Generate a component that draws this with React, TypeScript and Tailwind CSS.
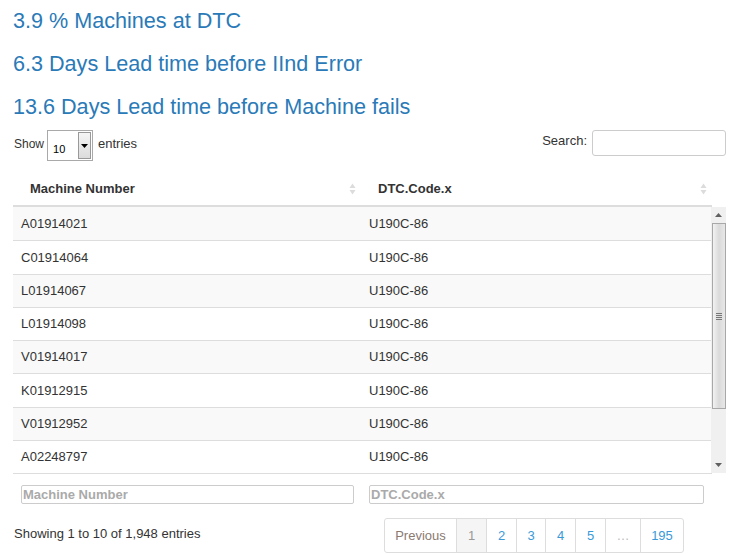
const rows = [
  'A01914021',
  'C01914064',
  'L01914067',
  'L01914098',
  'V01914017',
  'K01912915',
  'V01912952',
  'A02248797',
];

function SortIcon() {
  return (
    <svg width="7" height="12" viewBox="0 0 7 12" className="shrink-0">
      <path d="M3.5 0.5 L6.5 5 L0.5 5 Z" fill="#dcdcdc" />
      <path d="M3.5 11.5 L6.5 7 L0.5 7 Z" fill="#dcdcdc" />
    </svg>
  );
}

function ScrollBar() {
  return (
    <div className="w-[15px] bg-[#f0f0f0] flex flex-col items-center">
      <div className="h-[16px] flex items-center justify-center">
        <svg width="7" height="4" viewBox="0 0 7 4">
          <path d="M3.5 0 L7 4 L0 4 Z" fill="#606060" />
        </svg>
      </div>
      <div className="w-[14px] h-[186px] border border-[#a8a8a8] bg-gradient-to-r from-[#f2f2f2] via-[#dadada] to-[#e8e8e8] flex items-center justify-center">
        <div className="flex flex-col gap-[1px]">
          <div className="w-[6px] h-[1px] bg-[#777]" />
          <div className="w-[6px] h-[1px] bg-[#777]" />
          <div className="w-[6px] h-[1px] bg-[#777]" />
          <div className="w-[6px] h-[1px] bg-[#777]" />
        </div>
      </div>
      <div className="flex-1" />
      <div className="h-[16px] flex items-center justify-center">
        <svg width="7" height="4" viewBox="0 0 7 4">
          <path d="M3.5 4 L7 0 L0 0 Z" fill="#606060" />
        </svg>
      </div>
    </div>
  );
}

export default function App() {
  return (
    <div className="w-[738px] h-[554px] overflow-hidden bg-white pl-[13px] pr-[12px] text-[#333] text-[13px] font-['Liberation_Sans',Arial,sans-serif]">
      {/* KPI headings */}
      <div className="pt-[8px] flex flex-col text-[#2a7ab8] text-[21.6px] leading-[26px]">
        <div className="h-[43px]">3.9 % Machines at DTC</div>
        <div className="h-[43px]">6.3 Days Lead time before IInd Error</div>
        <div className="h-[36px]">13.6 Days Lead time before Machine fails</div>
      </div>

      {/* Length + search */}
      <div className="flex justify-between items-start h-[42px]">
        <div className="flex items-center gap-[3px] pl-[1px]">
          <span className="mt-[-4px] text-[12px]">Show</span>
          <div className="w-[46px] h-[31px] border border-[#a9a9a9] bg-white flex">
            <span className="flex-1 pl-[5px] pt-[10px] text-[11px] text-black">10</span>
            <div className="w-[13px] my-[1px] mr-[1px] border border-[#999] bg-gradient-to-b from-[#f5f5f5] to-[#dcdcdc] flex items-center justify-center">
              <svg width="7" height="4" viewBox="0 0 7 4">
                <path d="M0 0 L7 0 L3.5 4 Z" fill="#000" />
              </svg>
            </div>
          </div>
          <span className="mt-[-4px] ml-[2px]">entries</span>
        </div>
        <div className="flex items-center gap-[5px]">
          <span className="mt-[-4px]">Search:</span>
          <div className="w-[134px] h-[26px] border border-[#ccc] rounded-[3px] bg-white" />
        </div>
      </div>

      {/* Table */}
      <div className="flex flex-col">
        <div className="flex h-[35px] border-b-2 border-[#ddd] w-[699px] font-bold">
          <div className="w-[348px] flex items-center justify-between pl-[17px] pr-[5px]">
            <span>Machine Number</span>
            <SortIcon />
          </div>
          <div className="flex-1 flex items-center justify-between pl-[17px] pr-[5px]">
            <span>DTC.Code.x</span>
            <SortIcon />
          </div>
        </div>
        <div className="flex h-[266px]">
          <div className="w-[699px] flex flex-col">
            {rows.map((r, i) => (
              <div
                key={r}
                className={`flex items-center h-[33.25px] ${i > 0 ? 'border-t border-[#ddd]' : ''} ${i % 2 === 0 ? 'bg-[#f9f9f9]' : 'bg-white'}`}
              >
                <div className="w-[348px] pl-[8px]">{r}</div>
                <div className="flex-1 pl-[8px]">U190C-86</div>
              </div>
            ))}
          </div>
          <ScrollBar />
        </div>
        <div className="flex w-[699px] border-t border-[#ddd] pt-[11px] pb-[14px]">
          <div className="w-[348px] px-[8px]">
            <div className="h-[19px] border border-[#ccc] rounded-[2px] pl-[1px] text-[#aaa] font-bold leading-[17px] mr-[-1px]">
              Machine Number
            </div>
          </div>
          <div className="flex-1 px-[8px]">
            <div className="h-[19px] border border-[#ccc] rounded-[2px] pl-[1px] text-[#aaa] font-bold leading-[17px]">
              DTC.Code.x
            </div>
          </div>
        </div>
      </div>

      {/* Info + pagination */}
      <div className="flex justify-between items-start">
        <div className="pl-[1px] pt-[6px]">Showing 1 to 10 of 1,948 entries</div>
        <div className="flex h-[35px] mr-[42px] border border-[#ddd] rounded-[3px]">
          <div className="w-[71px] flex items-center justify-center text-[#8a7a72]">Previous</div>
          <div className="w-[30px] flex items-center justify-center border-l border-[#ddd] bg-[#f5f5f5] text-[#999]">1</div>
          <div className="w-[30px] flex items-center justify-center border-l border-[#ddd] text-[#3a9ad9]">2</div>
          <div className="w-[29px] flex items-center justify-center border-l border-[#ddd] text-[#3a9ad9]">3</div>
          <div className="w-[30px] flex items-center justify-center border-l border-[#ddd] text-[#3a9ad9]">4</div>
          <div className="w-[30px] flex items-center justify-center border-l border-[#ddd] text-[#3a9ad9]">5</div>
          <div className="w-[35px] flex items-center justify-center border-l border-[#ddd] text-[#bbb]">…</div>
          <div className="w-[43px] flex items-center justify-center border-l border-[#ddd] text-[#3a9ad9]">195</div>
        </div>
      </div>
    </div>
  );
}
